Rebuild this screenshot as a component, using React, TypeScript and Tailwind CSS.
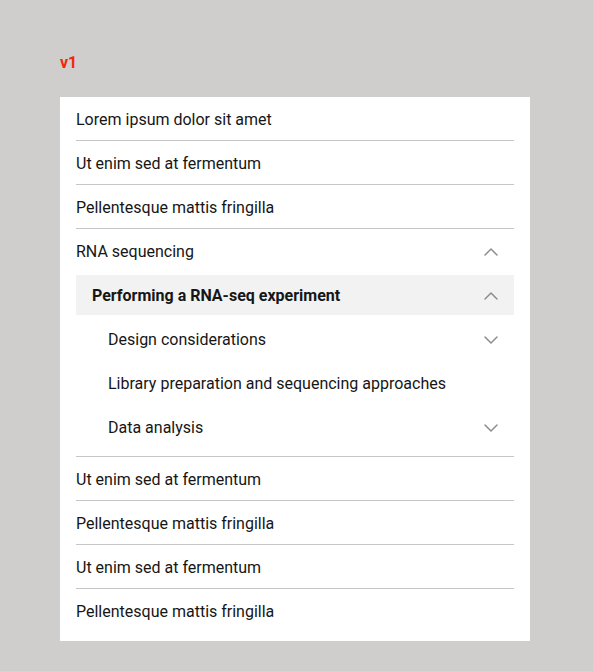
import React, { useState } from 'react';
import { ChevronDown, ChevronUp } from 'lucide-react';

const font = { fontFamily: 'Roboto, "Liberation Sans", sans-serif' };

const topItems = ['Lorem ipsum dolor sit amet', 'Ut enim sed at fermentum', 'Pellentesque mattis fringilla'];
const bottomItems = [
  'Ut enim sed at fermentum',
  'Pellentesque mattis fringilla',
  'Ut enim sed at fermentum',
  'Pellentesque mattis fringilla',
];

const Row: React.FC<{ label: string; last?: boolean }> = ({ label, last }) => (
  <div
    className={`flex h-[44px] items-center pt-[2px] text-[16px] text-[#161616] ${last ? '' : 'border-b border-[#c6c6c6]'}`}
  >
    {label}
  </div>
);

const App: React.FC = () => {
  const [open, setOpen] = useState<boolean>(true);
  const [subOpen, setSubOpen] = useState<boolean>(true);

  return (
    <div className="min-h-screen bg-[#cfcecc] pl-[60px] pt-[51px]" style={font}>
      <div className="text-[16px] font-bold leading-6 text-[#f5250a]">v1</div>
      <div className="mt-[22px] w-[470px] bg-white px-4 pb-[8px]">
        {topItems.map((item, i) => (
          <Row key={i} label={item} />
        ))}

        <div className="border-b border-[#c6c6c6] pb-[7px]">
          <button
            type="button"
            onClick={() => setOpen(!open)}
            className="flex h-[44px] w-full items-center justify-between pr-[11px] pt-[2px] text-left text-[16px] text-[#161616]"
          >
            <span>RNA sequencing</span>
            {open ? (
              <ChevronUp size={24} strokeWidth={1.5} color="#8d8d8d" />
            ) : (
              <ChevronDown size={24} strokeWidth={1.5} color="#8d8d8d" />
            )}
          </button>
          {open && (
            <div>
              <div className="py-[2px]">
                <button
                  type="button"
                  onClick={() => setSubOpen(!subOpen)}
                  className="flex h-10 w-full items-center justify-between bg-[#f2f2f2] pl-4 pr-[11px] pt-[2px] text-left text-[16px] font-bold text-[#161616]"
                >
                  <span>Performing a RNA-seq experiment</span>
                  {subOpen ? (
                    <ChevronUp size={24} strokeWidth={1.5} color="#8d8d8d" />
                  ) : (
                    <ChevronDown size={24} strokeWidth={1.5} color="#8d8d8d" />
                  )}
                </button>
              </div>
              {subOpen && (
                <div className="pl-8 text-[16px] text-[#161616]">
                  <div className="flex h-[44px] items-center justify-between pr-[11px] pt-[2px]">
                    <span>Design considerations</span>
                    <ChevronDown size={24} strokeWidth={1.5} color="#8d8d8d" />
                  </div>
                  <div className="flex h-[44px] items-center pt-[2px]">
                    <span>Library preparation and sequencing approaches</span>
                  </div>
                  <div className="flex h-[44px] items-center justify-between pr-[11px] pt-[2px]">
                    <span>Data analysis</span>
                    <ChevronDown size={24} strokeWidth={1.5} color="#8d8d8d" />
                  </div>
                </div>
              )}
            </div>
          )}
        </div>

        {bottomItems.map((item, i) => (
          <Row key={i} label={item} last={i === bottomItems.length - 1} />
        ))}
      </div>
    </div>
  );
};

export default App;
